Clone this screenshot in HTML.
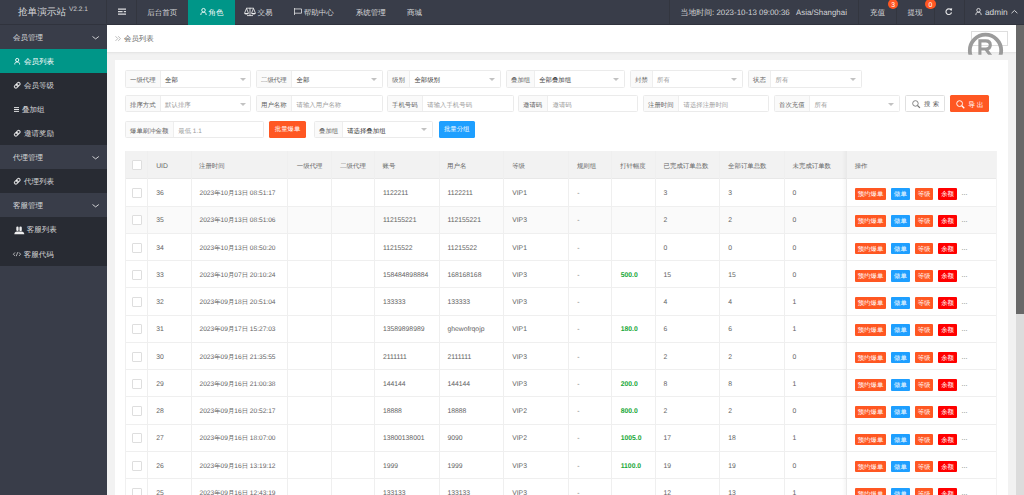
<!DOCTYPE html><html><head><meta charset="utf-8"><title>会员列表</title><style>
*{margin:0;padding:0;box-sizing:border-box}
html,body{width:1024px;height:495px;overflow:hidden;background:#f2f2f2}
body{position:relative;font-family:"Liberation Sans",sans-serif;text-rendering:geometricPrecision;color:#666}
.ab{position:absolute;white-space:nowrap}
svg{position:absolute;overflow:visible}
#hdr{position:absolute;left:0;top:0;width:1024px;height:25px;background:#393d49;border-bottom:1px solid #30333d}
.ht{position:absolute;top:0;height:24px;line-height:25.4px;font-size:7.5px;color:rgba(255,255,255,.8);white-space:nowrap}
.hsep{position:absolute;top:0;width:1px;height:24px;background:#33363f}
.badge{position:absolute;top:-1.2px;width:10.6px;height:10.6px;border-radius:50%;background:#ff5722;color:#fff;font-size:6.8px;line-height:13.4px;text-align:center}
#side{position:absolute;left:0;top:25px;width:107px;height:470px;background:#393d49}
.si{position:absolute;left:0;width:107px;height:24.06px;line-height:26px;font-size:7.5px;color:rgba(255,255,255,.8);white-space:nowrap}
.si.ch{background:#282b33}
.si.on{background:#009688;color:#fff}
#crumb{position:absolute;left:107px;top:25px;width:909px;height:28px;background:#fff;border-bottom:1px solid #e6e6e6;box-shadow:0 1px 2px rgba(0,0,0,.03)}
#card{position:absolute;left:115px;top:59.6px;width:893px;height:500px;background:#fff}
.fb{position:absolute;height:17.2px;border:1px solid #ebebeb;border-radius:1.5px;background:#fff;font-size:6.4px}
.fl{position:absolute;left:0;top:0;bottom:0;background:#fafafa;border-right:1px solid #eee;color:#5f5f5f;line-height:15px;padding-top:1.5px;padding-left:4px;white-space:nowrap}
.fv{position:absolute;top:1.5px;line-height:15px;color:#333;white-space:nowrap}
.fv.ph{color:#9c9c9c}
.arr{position:absolute;top:6.4px;width:0;height:0;border-left:3.1px solid transparent;border-right:3.1px solid transparent;border-top:3.2px solid #c2c2c2}
.btn{position:absolute;height:17px;line-height:18.6px;color:#fff;font-size:6.4px;text-align:center;border-radius:1.5px;white-space:nowrap}
#tbl{position:absolute;left:125px;top:151.2px;width:872px;height:360px;border-left:1px solid #f0f0f0;border-right:1px solid #f3f3f3;overflow:hidden}
.th{position:absolute;left:0;top:0;width:100%;height:27.4px;background:#f2f2f2;border-bottom:1px solid #e8e8e8}
.tr{position:absolute;left:0;width:100%;height:27.26px;border-bottom:1px solid #efefef}
.vl{position:absolute;top:0;width:1px;height:360px;background:#efefef}
.c{position:absolute;font-size:6.8px;line-height:10px;color:#646464;white-space:nowrap}
.c.z{font-size:6.4px;color:#666}
.c i{font-style:normal;font-size:6.4px}
.cb{position:absolute;width:9.8px;height:10px;border:1px solid #dedede;background:#fff;border-radius:1px}
.ob{position:absolute;height:11.7px;line-height:13.4px;font-size:6.4px;color:#fff;text-align:center;border-radius:1px;white-space:nowrap}
#fix{position:absolute;left:846px;top:151.2px;width:150px;height:360px;background:transparent;overflow:hidden;border-left:1px solid #e9e9e9}
#fsh{position:absolute;left:842px;top:151.2px;width:4px;height:360px;background:linear-gradient(to right,rgba(0,0,0,0),rgba(0,0,0,.035))}
#sb{position:absolute;left:1016px;top:25px;width:8px;height:470px;background:#dcdcdc}
#thumb{position:absolute;left:0;top:0;width:8px;height:289px;background:#686868}
</style></head><body>
<div id="hdr">
<div class="ht" style="left:18px;top:-0.5px;font-size:9.6px;color:rgba(255,255,255,.8)">抢单演示站</div>
<div class="ht" style="left:69px;top:-3.2px;font-size:6.5px;color:rgba(255,255,255,.75)">V2.2.1</div>
<div class="hsep" style="left:106.3px"></div>
<div class="hsep" style="left:136.2px"></div>
<svg style="left:118px;top:8px" width="8" height="7"><path d="M0 1.1H8M0 3.6H4.6M5.8 3.6H8M0 6.1H8" stroke="rgba(255,255,255,.82)" stroke-width="1.2"/></svg>
<div class="ht" style="left:147.3px">后台首页</div>
<div style="position:absolute;left:188.1px;top:0;width:46.7px;height:25px;background:#009688"></div>
<svg style="left:199.5px;top:7.9px" width="7.0" height="7.1" viewBox="0 0 7 7.10" preserveAspectRatio="none"><circle cx="3.5" cy="2.2" r="1.75" fill="none" stroke="#fff" stroke-width="0.90"/><path d="M0.9 7.00V6.00C0.9 4.9 2.0 4.45 3.5 4.45C5.0 4.45 6.1 4.9 6.1 6.00V7.00" fill="none" stroke="#fff" stroke-width="0.90"/></svg>
<div class="ht" style="left:208.6px;color:#fff">角色</div>
<svg style="left:242px;top:5px" width="16" height="13" viewBox="0 0 16 13"><g fill="none" stroke="rgba(255,255,255,.85)" stroke-width="0.9"><path d="M4.3 3.2H11.7M8 2.8V10.6M5 10.6H11"/><path d="M4.5 3.4L2.6 8.1M4.5 3.4L6.4 8.1M11.5 3.4L9.6 8.1M11.5 3.4L13.4 8.1"/></g><path d="M2.1 8H6.9Q6.6 9.6 4.5 9.6Q2.4 9.6 2.1 8ZM9.1 8H13.9Q13.6 9.6 11.5 9.6Q9.4 9.6 9.1 8Z" fill="rgba(255,255,255,.9)"/></svg>
<div class="ht" style="left:257.4px">交易</div>
<svg style="left:294px;top:8px" width="8" height="7" viewBox="0 0 16 14"><g fill="none" stroke="rgba(255,255,255,.8)" stroke-width="1.7"><path d="M1 0V14"/><path d="M1 1.9H15V10.4H1"/></g></svg>
<div class="ht" style="left:303.8px">帮助中心</div>
<div class="ht" style="left:355.8px">系统管理</div>
<div class="ht" style="left:407px">商城</div>
<div class="hsep" style="left:669.4px"></div>
<div class="ht" style="left:680.5px;font-size:7.9px;color:rgba(255,255,255,.78)">当地时间: 2023-10-13 09:00:36</div>
<div class="ht" style="left:796px;font-size:7.9px;color:rgba(255,255,255,.78)">Asia/Shanghai</div>
<div class="hsep" style="left:858.4px"></div>
<div class="hsep" style="left:896.3px"></div>
<div class="hsep" style="left:933.6px"></div>
<div class="hsep" style="left:963.8px"></div>
<div class="ht" style="left:869.9px">充值</div>
<div class="badge" style="left:887.9px">3</div>
<div class="ht" style="left:907.4px">提现</div>
<div class="badge" style="left:925.2px">0</div>
<svg style="left:944.9px;top:7.8px" width="7.4" height="7.4" viewBox="0 0 14 14"><path d="M11.6 4.2A5.3 5.3 0 1 0 12.3 8.2" fill="none" stroke="rgba(255,255,255,.85)" stroke-width="2.2"/><path d="M8.6 1.2L13.6 0.6L13 5.8Z" fill="rgba(255,255,255,.85)"/></svg>
<svg style="left:975.0px;top:8.0px" width="7.0" height="7.2" viewBox="0 0 7 7.20" preserveAspectRatio="none"><circle cx="3.5" cy="2.2" r="1.75" fill="none" stroke="rgba(255,255,255,.85)" stroke-width="0.90"/><path d="M0.9 7.10V6.10C0.9 4.9 2.0 4.45 3.5 4.45C5.0 4.45 6.1 4.9 6.1 6.10V7.10" fill="none" stroke="rgba(255,255,255,.85)" stroke-width="0.90"/></svg>
<div class="ht" style="left:985px;font-size:8.3px;color:rgba(255,255,255,.8)">admin</div>
<svg style="left:1011.4px;top:9.8px" width="6.9" height="3.7"><path d="M0.5 3.2 L3.45 0.5 L6.4 3.2" fill="none" stroke="rgba(255,255,255,.75)" stroke-width="1.0"/></svg>
</div>
<div id="side">
<div class="si" style="top:0.00px">
<span class="ab" style="left:13px">会员管理</span>
<svg style="left:91.6px;top:10.6px" width="7.3" height="3.4"><path d="M0.5 0.5 L3.65 2.9 L6.8 0.5" fill="none" stroke="rgba(255,255,255,.75)" stroke-width="1.0"/></svg>
</div>
<div class="si on" style="top:24.06px">
<svg style="left:13.8px;top:8.9px" width="6.4" height="6.6" viewBox="0 0 7 7.22" preserveAspectRatio="none"><circle cx="3.5" cy="2.2" r="1.75" fill="none" stroke="#fff" stroke-width="0.98"/><path d="M0.9 7.12V6.12C0.9 4.9 2.0 4.45 3.5 4.45C5.0 4.45 6.1 4.9 6.1 6.12V7.12" fill="none" stroke="#fff" stroke-width="0.98"/></svg>
<span class="ab" style="left:24px">会员列表</span>
</div>
<div class="si ch" style="top:48.12px">
<svg style="left:12.8px;top:7.7px" width="8.5" height="8.5" viewBox="0 0 17 17"><g transform="rotate(-45 8.5 8.5)" fill="none" stroke="rgba(255,255,255,.8)" stroke-width="2.3"><rect x="1.6" y="5.5" width="8.2" height="6" rx="3"/><rect x="7.2" y="5.5" width="8.2" height="6" rx="3"/></g></svg>
<span class="ab" style="left:24px">会员等级</span>
</div>
<div class="si ch" style="top:72.18px">
<svg style="left:14.2px;top:9.6px" width="5" height="5"><path d="M0 0.6H5M0 2.5H5M0 4.4H5" stroke="rgba(255,255,255,.85)" stroke-width="1"/></svg>
<span class="ab" style="left:21.9px">叠加组</span>
</div>
<div class="si ch" style="top:96.24px">
<svg style="left:12.8px;top:7.7px" width="8.5" height="8.5" viewBox="0 0 17 17"><g transform="rotate(-45 8.5 8.5)" fill="none" stroke="rgba(255,255,255,.8)" stroke-width="2.3"><rect x="1.6" y="5.5" width="8.2" height="6" rx="3"/><rect x="7.2" y="5.5" width="8.2" height="6" rx="3"/></g></svg>
<span class="ab" style="left:24px">邀请奖励</span>
</div>
<div class="si" style="top:120.30px">
<span class="ab" style="left:13px">代理管理</span>
<svg style="left:91.6px;top:10.6px" width="7.3" height="3.4"><path d="M0.5 0.5 L3.65 2.9 L6.8 0.5" fill="none" stroke="rgba(255,255,255,.75)" stroke-width="1.0"/></svg>
</div>
<div class="si ch" style="top:144.36px">
<svg style="left:12.8px;top:7.7px" width="8.5" height="8.5" viewBox="0 0 17 17"><g transform="rotate(-45 8.5 8.5)" fill="none" stroke="rgba(255,255,255,.8)" stroke-width="2.3"><rect x="1.6" y="5.5" width="8.2" height="6" rx="3"/><rect x="7.2" y="5.5" width="8.2" height="6" rx="3"/></g></svg>
<span class="ab" style="left:24px">代理列表</span>
</div>
<div class="si" style="top:168.42px">
<span class="ab" style="left:13px">客服管理</span>
<svg style="left:91.6px;top:10.6px" width="7.3" height="3.4"><path d="M0.5 0.5 L3.65 2.9 L6.8 0.5" fill="none" stroke="rgba(255,255,255,.75)" stroke-width="1.0"/></svg>
</div>
<div class="si ch" style="top:192.48px">
<svg style="left:13.6px;top:8.1px" width="10.5" height="8.4" viewBox="0 0 10.5 8.4"><g fill="rgba(255,255,255,.92)"><rect x="2.3" y="0.5" width="2.3" height="4.6" rx="1.15"/><rect x="5.4" y="0.5" width="2.4" height="4.6" rx="1.2"/><path d="M0.3 8.2Q0.5 5.5 3 5.5H7.5Q10 5.5 10.3 8.2Z"/></g></svg>
<span class="ab" style="left:26.7px">客服列表</span>
</div>
<div class="si ch" style="top:216.54px">
<svg style="left:13.1px;top:10.4px" width="8" height="4.4" viewBox="0 0 16 8"><g fill="none" stroke="rgba(255,255,255,.9)" stroke-width="1.4"><path d="M4 0.5L0.8 4L4 7.5M12 0.5L15.2 4L12 7.5M9.5 0L6.5 8"/></g></svg>
<span class="ab" style="left:23.7px">客服代码</span>
</div>
</div>
<div id="crumb">
<svg style="left:8px;top:11.1px" width="6" height="5.2"><path d="M0.5 0.3L2.8 2.6L0.5 4.9M3.2 0.3L5.5 2.6L3.2 4.9" fill="none" stroke="#aaa" stroke-width="0.8"/></svg>
<span class="ab" style="left:17px;top:0;line-height:27px;font-size:7.4px;color:#5f5f5f">会员列表</span>
<div style="position:absolute;left:863.5px;top:6.3px;width:37.5px;height:15px;border:1px solid #dedede"></div>
</div>
<svg style="left:967px;top:32px;" width="37" height="23" viewBox="0 0 37 23"><defs><clipPath id="cl"><rect x="0" y="0" width="37" height="22.7"/></clipPath></defs><g clip-path="url(#cl)"><circle cx="18.5" cy="18.4" r="15.7" fill="none" stroke="#9b9b9b" stroke-width="3.8"/><path d="M12.9 24V8.9H18.8C22 8.9 23.3 10.6 23.3 13C23.3 15.4 21.6 17 18.8 17H12.9M18.6 16.8L24 24" fill="none" stroke="#9b9b9b" stroke-width="3.1"/></g></svg>
<div id="card"></div>
<div class="fb" style="left:125px;top:70.4px;width:126px"><div class="fl" style="width:35px">一级代理</div><div class="fv" style="left:39.1px">全部</div><div class="arr" style="left:113.5px"></div></div>
<div class="fb" style="left:256px;top:70.4px;width:127px"><div class="fl" style="width:35px">二级代理</div><div class="fv" style="left:39.5px">全部</div><div class="arr" style="left:113.9px"></div></div>
<div class="fb" style="left:387px;top:70.4px;width:114px"><div class="fl" style="width:22px">级别</div><div class="fv" style="left:26.4px">全部级别</div><div class="arr" style="left:101.1px"></div></div>
<div class="fb" style="left:506px;top:70.4px;width:119px"><div class="fl" style="width:28px">叠加组</div><div class="fv" style="left:32.2px">全部叠加组</div><div class="arr" style="left:106.2px"></div></div>
<div class="fb" style="left:630px;top:70.4px;width:113px"><div class="fl" style="width:22px">封禁</div><div class="fv ph" style="left:26.1px">所有</div><div class="arr" style="left:100.2px"></div></div>
<div class="fb" style="left:748px;top:70.4px;width:114px"><div class="fl" style="width:22px">状态</div><div class="fv ph" style="left:26.5px">所有</div><div class="arr" style="left:100.9px"></div></div>
<div class="fb" style="left:125px;top:95.3px;width:126px"><div class="fl" style="width:35px">排序方式</div><div class="fv ph" style="left:39.1px">默认排序</div><div class="arr" style="left:113.5px"></div></div>
<div class="fb" style="left:256px;top:95.3px;width:127px"><div class="fl" style="width:35px">用户名称</div><div class="fv ph" style="left:39.5px">请输入用户名称</div></div>
<div class="fb" style="left:387px;top:95.3px;width:127px"><div class="fl" style="width:35px">手机号码</div><div class="fv ph" style="left:39.3px">请输入手机号码</div></div>
<div class="fb" style="left:518px;top:95.3px;width:120px"><div class="fl" style="width:29px">邀请码</div><div class="fv ph" style="left:33.5px">邀请码</div></div>
<div class="fb" style="left:643px;top:95.3px;width:126px"><div class="fl" style="width:35px">注册时间</div><div class="fv ph" style="left:39.5px">请选择注册时间</div></div>
<div class="fb" style="left:774px;top:95.3px;width:126px"><div class="fl" style="width:35px">首次充值</div><div class="fv ph" style="left:39.6px">所有</div><div class="arr" style="left:113.1px"></div></div>
<div class="btn" style="left:905px;top:95.2px;width:40px;border:1px solid #e0e0e0;background:#fff"></div>
<svg style="left:911.7px;top:99.8px" width="8.6" height="8.6" viewBox="0 0 18 18"><circle cx="7.2" cy="7.2" r="5.8" fill="none" stroke="#777" stroke-width="1.9"/><path d="M11.5 11.5L16.6 16.6" stroke="#777" stroke-width="2.6"/></svg>
<div class="ab" style="left:924px;top:96.3px;line-height:17px;font-size:6.4px;color:#555;letter-spacing:2.3px">搜索</div>
<div class="btn" style="left:950.2px;top:95.2px;width:38.5px;background:#ff5722"></div>
<svg style="left:955.8px;top:99.6px" width="9" height="9" viewBox="0 0 18 18"><circle cx="7.2" cy="7.2" r="5.8" fill="none" stroke="#fff" stroke-width="1.9"/><path d="M11.5 11.5L16.6 16.6" stroke="#fff" stroke-width="2.6"/></svg>
<div class="ab" style="left:968.3px;top:96.6px;line-height:17px;font-size:6.8px;color:#fff;letter-spacing:1.6px">导出</div>
<div class="fb" style="left:125px;top:121.0px;width:139px"><div class="fl" style="width:48px">爆单刷冲金额</div><div class="fv ph" style="left:52.3px">最低 1.1</div></div>
<div class="btn" style="left:269.4px;top:121.0px;width:36.4px;height:16.6px;line-height:18.2px;background:#ff5722">批量爆单</div>
<div class="fb" style="left:314px;top:121.0px;width:119px"><div class="fl" style="width:28px">叠加组</div><div class="fv" style="left:32.2px">请选择叠加组</div><div class="arr" style="left:106.2px"></div></div>
<div class="btn" style="left:438.5px;top:121.0px;width:36.4px;height:16.6px;line-height:18.2px;background:#1e9fff">批量分组</div>
<div id="tbl">
<div class="th" style="height:28.1px"></div>
<div class="tr" style="top:28.10px;"></div>
<div class="tr" style="top:55.36px;background:#fafafa;"></div>
<div class="tr" style="top:82.62px;"></div>
<div class="tr" style="top:109.88px;"></div>
<div class="tr" style="top:137.14px;"></div>
<div class="tr" style="top:164.40px;"></div>
<div class="tr" style="top:191.66px;"></div>
<div class="tr" style="top:218.92px;"></div>
<div class="tr" style="top:246.18px;"></div>
<div class="tr" style="top:273.44px;"></div>
<div class="tr" style="top:300.70px;"></div>
<div class="tr" style="top:327.96px;"></div>
<div class="vl" style="left:21px"></div>
<div class="vl" style="left:65px"></div>
<div class="vl" style="left:161px"></div>
<div class="vl" style="left:205px"></div>
<div class="vl" style="left:248px"></div>
<div class="vl" style="left:313px"></div>
<div class="vl" style="left:377px"></div>
<div class="vl" style="left:442px"></div>
<div class="vl" style="left:485px"></div>
<div class="vl" style="left:529px"></div>
<div class="vl" style="left:593px"></div>
<div class="vl" style="left:658px"></div>
<div class="cb" style="left:6.2px;top:9.10px"></div>
<div class="c" style="left:30.2px;top:11.00px;">UID</div>
<div class="c z" style="left:73.0px;top:11.00px;">注册时间</div>
<div class="c z" style="left:161.7px;width:43.9px;text-align:center;top:11.00px">一级代理</div>
<div class="c z" style="left:205.6px;width:42.8px;text-align:center;top:11.00px">二级代理</div>
<div class="c z" style="left:256.6px;top:11.00px;">账号</div>
<div class="c z" style="left:321.1px;top:11.00px;">用户名</div>
<div class="c z" style="left:386.2px;top:11.00px;">等级</div>
<div class="c z" style="left:450.9px;top:11.00px;">规则组</div>
<div class="c z" style="left:494.2px;top:11.00px;">打针幅度</div>
<div class="c z" style="left:537.6px;top:11.00px;">已完成订单总数</div>
<div class="c z" style="left:602.1px;top:11.00px;">全部订单总数</div>
<div class="c z" style="left:666.6px;top:11.00px;">未完成订单数</div>
<div class="cb" style="left:6.2px;top:36.83px"></div>
<div class="c" style="left:30.2px;top:37.83px;">36</div>
<div class="c" style="left:73.5px;top:37.83px;font-size:6.6px">2023<i>年</i>10<i>月</i>13<i>日</i> 08:51:17</div>
<div class="c" style="left:256.9px;top:37.83px;">1122211</div>
<div class="c" style="left:321.4px;top:37.83px;">1122211</div>
<div class="c" style="left:386.2px;top:37.83px;">VIP1</div>
<div class="c" style="left:451.2px;top:37.83px;">-</div>
<div class="c" style="left:537.6px;top:37.83px;">3</div>
<div class="c" style="left:602.3px;top:37.83px;">3</div>
<div class="c" style="left:666.6px;top:37.83px;">0</div>
<div class="cb" style="left:6.2px;top:64.09px"></div>
<div class="c" style="left:30.2px;top:65.09px;">35</div>
<div class="c" style="left:73.5px;top:65.09px;font-size:6.6px">2023<i>年</i>10<i>月</i>13<i>日</i> 08:51:06</div>
<div class="c" style="left:256.9px;top:65.09px;">112155221</div>
<div class="c" style="left:321.4px;top:65.09px;">112155221</div>
<div class="c" style="left:386.2px;top:65.09px;">VIP3</div>
<div class="c" style="left:451.2px;top:65.09px;">-</div>
<div class="c" style="left:537.6px;top:65.09px;">2</div>
<div class="c" style="left:602.3px;top:65.09px;">2</div>
<div class="c" style="left:666.6px;top:65.09px;">0</div>
<div class="cb" style="left:6.2px;top:91.35px"></div>
<div class="c" style="left:30.2px;top:92.35px;">34</div>
<div class="c" style="left:73.5px;top:92.35px;font-size:6.6px">2023<i>年</i>10<i>月</i>13<i>日</i> 08:50:20</div>
<div class="c" style="left:256.9px;top:92.35px;">11215522</div>
<div class="c" style="left:321.4px;top:92.35px;">11215522</div>
<div class="c" style="left:386.2px;top:92.35px;">VIP1</div>
<div class="c" style="left:451.2px;top:92.35px;">-</div>
<div class="c" style="left:537.6px;top:92.35px;">0</div>
<div class="c" style="left:602.3px;top:92.35px;">0</div>
<div class="c" style="left:666.6px;top:92.35px;">0</div>
<div class="cb" style="left:6.2px;top:118.61px"></div>
<div class="c" style="left:30.2px;top:119.61px;">33</div>
<div class="c" style="left:73.5px;top:119.61px;font-size:6.6px">2023<i>年</i>10<i>月</i>07<i>日</i> 20:10:24</div>
<div class="c" style="left:256.9px;top:119.61px;">158484898884</div>
<div class="c" style="left:321.4px;top:119.61px;">168168168</div>
<div class="c" style="left:386.2px;top:119.61px;">VIP3</div>
<div class="c" style="left:451.2px;top:119.61px;">-</div>
<div class="c" style="left:494.7px;top:119.61px;color:#1aa83b;font-weight:bold">500.0</div>
<div class="c" style="left:537.6px;top:119.61px;">15</div>
<div class="c" style="left:602.3px;top:119.61px;">15</div>
<div class="c" style="left:666.6px;top:119.61px;">0</div>
<div class="cb" style="left:6.2px;top:145.87px"></div>
<div class="c" style="left:30.2px;top:146.87px;">32</div>
<div class="c" style="left:73.5px;top:146.87px;font-size:6.6px">2023<i>年</i>09<i>月</i>18<i>日</i> 20:51:04</div>
<div class="c" style="left:256.9px;top:146.87px;">133333</div>
<div class="c" style="left:321.4px;top:146.87px;">133333</div>
<div class="c" style="left:386.2px;top:146.87px;">VIP3</div>
<div class="c" style="left:451.2px;top:146.87px;">-</div>
<div class="c" style="left:537.6px;top:146.87px;">4</div>
<div class="c" style="left:602.3px;top:146.87px;">4</div>
<div class="c" style="left:666.6px;top:146.87px;">1</div>
<div class="cb" style="left:6.2px;top:173.13px"></div>
<div class="c" style="left:30.2px;top:174.13px;">31</div>
<div class="c" style="left:73.5px;top:174.13px;font-size:6.6px">2023<i>年</i>09<i>月</i>17<i>日</i> 15:27:03</div>
<div class="c" style="left:256.9px;top:174.13px;">13589898989</div>
<div class="c" style="left:321.4px;top:174.13px;">ghewofrqojp</div>
<div class="c" style="left:386.2px;top:174.13px;">VIP1</div>
<div class="c" style="left:451.2px;top:174.13px;">-</div>
<div class="c" style="left:494.7px;top:174.13px;color:#1aa83b;font-weight:bold">180.0</div>
<div class="c" style="left:537.6px;top:174.13px;">6</div>
<div class="c" style="left:602.3px;top:174.13px;">6</div>
<div class="c" style="left:666.6px;top:174.13px;">1</div>
<div class="cb" style="left:6.2px;top:200.39px"></div>
<div class="c" style="left:30.2px;top:201.39px;">30</div>
<div class="c" style="left:73.5px;top:201.39px;font-size:6.6px">2023<i>年</i>09<i>月</i>16<i>日</i> 21:35:55</div>
<div class="c" style="left:256.9px;top:201.39px;">2111111</div>
<div class="c" style="left:321.4px;top:201.39px;">2111111</div>
<div class="c" style="left:386.2px;top:201.39px;">VIP3</div>
<div class="c" style="left:451.2px;top:201.39px;">-</div>
<div class="c" style="left:537.6px;top:201.39px;">2</div>
<div class="c" style="left:602.3px;top:201.39px;">2</div>
<div class="c" style="left:666.6px;top:201.39px;">0</div>
<div class="cb" style="left:6.2px;top:227.65px"></div>
<div class="c" style="left:30.2px;top:228.65px;">29</div>
<div class="c" style="left:73.5px;top:228.65px;font-size:6.6px">2023<i>年</i>09<i>月</i>16<i>日</i> 21:00:38</div>
<div class="c" style="left:256.9px;top:228.65px;">144144</div>
<div class="c" style="left:321.4px;top:228.65px;">144144</div>
<div class="c" style="left:386.2px;top:228.65px;">VIP3</div>
<div class="c" style="left:451.2px;top:228.65px;">-</div>
<div class="c" style="left:494.7px;top:228.65px;color:#1aa83b;font-weight:bold">200.0</div>
<div class="c" style="left:537.6px;top:228.65px;">8</div>
<div class="c" style="left:602.3px;top:228.65px;">8</div>
<div class="c" style="left:666.6px;top:228.65px;">1</div>
<div class="cb" style="left:6.2px;top:254.91px"></div>
<div class="c" style="left:30.2px;top:255.91px;">28</div>
<div class="c" style="left:73.5px;top:255.91px;font-size:6.6px">2023<i>年</i>09<i>月</i>16<i>日</i> 20:52:17</div>
<div class="c" style="left:256.9px;top:255.91px;">18888</div>
<div class="c" style="left:321.4px;top:255.91px;">18888</div>
<div class="c" style="left:386.2px;top:255.91px;">VIP2</div>
<div class="c" style="left:451.2px;top:255.91px;">-</div>
<div class="c" style="left:494.7px;top:255.91px;color:#1aa83b;font-weight:bold">800.0</div>
<div class="c" style="left:537.6px;top:255.91px;">2</div>
<div class="c" style="left:602.3px;top:255.91px;">2</div>
<div class="c" style="left:666.6px;top:255.91px;">0</div>
<div class="cb" style="left:6.2px;top:282.17px"></div>
<div class="c" style="left:30.2px;top:283.17px;">27</div>
<div class="c" style="left:73.5px;top:283.17px;font-size:6.6px">2023<i>年</i>09<i>月</i>16<i>日</i> 18:07:00</div>
<div class="c" style="left:256.9px;top:283.17px;">13800138001</div>
<div class="c" style="left:321.4px;top:283.17px;">9090</div>
<div class="c" style="left:386.2px;top:283.17px;">VIP2</div>
<div class="c" style="left:451.2px;top:283.17px;">-</div>
<div class="c" style="left:494.7px;top:283.17px;color:#1aa83b;font-weight:bold">1005.0</div>
<div class="c" style="left:537.6px;top:283.17px;">17</div>
<div class="c" style="left:602.3px;top:283.17px;">18</div>
<div class="c" style="left:666.6px;top:283.17px;">1</div>
<div class="cb" style="left:6.2px;top:309.43px"></div>
<div class="c" style="left:30.2px;top:310.43px;">26</div>
<div class="c" style="left:73.5px;top:310.43px;font-size:6.6px">2023<i>年</i>09<i>月</i>16<i>日</i> 13:19:12</div>
<div class="c" style="left:256.9px;top:310.43px;">1999</div>
<div class="c" style="left:321.4px;top:310.43px;">1999</div>
<div class="c" style="left:386.2px;top:310.43px;">VIP3</div>
<div class="c" style="left:451.2px;top:310.43px;">-</div>
<div class="c" style="left:494.7px;top:310.43px;color:#1aa83b;font-weight:bold">1100.0</div>
<div class="c" style="left:537.6px;top:310.43px;">19</div>
<div class="c" style="left:602.3px;top:310.43px;">19</div>
<div class="c" style="left:666.6px;top:310.43px;">0</div>
<div class="cb" style="left:6.2px;top:336.69px"></div>
<div class="c" style="left:30.2px;top:337.69px;">25</div>
<div class="c" style="left:73.5px;top:337.69px;font-size:6.6px">2023<i>年</i>09<i>月</i>16<i>日</i> 12:43:19</div>
<div class="c" style="left:256.9px;top:337.69px;">133133</div>
<div class="c" style="left:321.4px;top:337.69px;">133133</div>
<div class="c" style="left:386.2px;top:337.69px;">VIP3</div>
<div class="c" style="left:451.2px;top:337.69px;">-</div>
<div class="c" style="left:537.6px;top:337.69px;">12</div>
<div class="c" style="left:602.3px;top:337.69px;">13</div>
<div class="c" style="left:666.6px;top:337.69px;">1</div>
</div>
<div id="fsh"></div>
<div id="fix">
<div class="th" style="height:28.1px"></div>
<div class="tr" style="top:28.10px;background:#fff;"></div>
<div class="tr" style="top:55.36px;background:#fafafa;"></div>
<div class="tr" style="top:82.62px;background:#fff;"></div>
<div class="tr" style="top:109.88px;background:#fff;"></div>
<div class="tr" style="top:137.14px;background:#fff;"></div>
<div class="tr" style="top:164.40px;background:#fff;"></div>
<div class="tr" style="top:191.66px;background:#fff;"></div>
<div class="tr" style="top:218.92px;background:#fff;"></div>
<div class="tr" style="top:246.18px;background:#fff;"></div>
<div class="tr" style="top:273.44px;background:#fff;"></div>
<div class="tr" style="top:300.70px;background:#fff;"></div>
<div class="tr" style="top:327.96px;background:#fff;"></div>
<div class="c z" style="left:7.7px;top:11.00px">操作</div>
<div class="ob" style="left:8.0px;top:36.98px;width:31px;background:#ff5722">预约爆单</div>
<div class="ob" style="left:44.3px;top:36.98px;width:18.4px;background:#1e9fff">做单</div>
<div class="ob" style="left:68.0px;top:36.98px;width:18.2px;background:#ff5722">等级</div>
<div class="ob" style="left:91.3px;top:36.98px;width:18.5px;background:#ff0000">余额</div>
<div class="c" style="left:114.6px;top:37.83px;color:#666;font-size:7px">...</div>
<div class="ob" style="left:8.0px;top:64.24px;width:31px;background:#ff5722">预约爆单</div>
<div class="ob" style="left:44.3px;top:64.24px;width:18.4px;background:#1e9fff">做单</div>
<div class="ob" style="left:68.0px;top:64.24px;width:18.2px;background:#ff5722">等级</div>
<div class="ob" style="left:91.3px;top:64.24px;width:18.5px;background:#ff0000">余额</div>
<div class="c" style="left:114.6px;top:65.09px;color:#666;font-size:7px">...</div>
<div class="ob" style="left:8.0px;top:91.50px;width:31px;background:#ff5722">预约爆单</div>
<div class="ob" style="left:44.3px;top:91.50px;width:18.4px;background:#1e9fff">做单</div>
<div class="ob" style="left:68.0px;top:91.50px;width:18.2px;background:#ff5722">等级</div>
<div class="ob" style="left:91.3px;top:91.50px;width:18.5px;background:#ff0000">余额</div>
<div class="c" style="left:114.6px;top:92.35px;color:#666;font-size:7px">...</div>
<div class="ob" style="left:8.0px;top:118.76px;width:31px;background:#ff5722">预约爆单</div>
<div class="ob" style="left:44.3px;top:118.76px;width:18.4px;background:#1e9fff">做单</div>
<div class="ob" style="left:68.0px;top:118.76px;width:18.2px;background:#ff5722">等级</div>
<div class="ob" style="left:91.3px;top:118.76px;width:18.5px;background:#ff0000">余额</div>
<div class="c" style="left:114.6px;top:119.61px;color:#666;font-size:7px">...</div>
<div class="ob" style="left:8.0px;top:146.02px;width:31px;background:#ff5722">预约爆单</div>
<div class="ob" style="left:44.3px;top:146.02px;width:18.4px;background:#1e9fff">做单</div>
<div class="ob" style="left:68.0px;top:146.02px;width:18.2px;background:#ff5722">等级</div>
<div class="ob" style="left:91.3px;top:146.02px;width:18.5px;background:#ff0000">余额</div>
<div class="c" style="left:114.6px;top:146.87px;color:#666;font-size:7px">...</div>
<div class="ob" style="left:8.0px;top:173.28px;width:31px;background:#ff5722">预约爆单</div>
<div class="ob" style="left:44.3px;top:173.28px;width:18.4px;background:#1e9fff">做单</div>
<div class="ob" style="left:68.0px;top:173.28px;width:18.2px;background:#ff5722">等级</div>
<div class="ob" style="left:91.3px;top:173.28px;width:18.5px;background:#ff0000">余额</div>
<div class="c" style="left:114.6px;top:174.13px;color:#666;font-size:7px">...</div>
<div class="ob" style="left:8.0px;top:200.54px;width:31px;background:#ff5722">预约爆单</div>
<div class="ob" style="left:44.3px;top:200.54px;width:18.4px;background:#1e9fff">做单</div>
<div class="ob" style="left:68.0px;top:200.54px;width:18.2px;background:#ff5722">等级</div>
<div class="ob" style="left:91.3px;top:200.54px;width:18.5px;background:#ff0000">余额</div>
<div class="c" style="left:114.6px;top:201.39px;color:#666;font-size:7px">...</div>
<div class="ob" style="left:8.0px;top:227.80px;width:31px;background:#ff5722">预约爆单</div>
<div class="ob" style="left:44.3px;top:227.80px;width:18.4px;background:#1e9fff">做单</div>
<div class="ob" style="left:68.0px;top:227.80px;width:18.2px;background:#ff5722">等级</div>
<div class="ob" style="left:91.3px;top:227.80px;width:18.5px;background:#ff0000">余额</div>
<div class="c" style="left:114.6px;top:228.65px;color:#666;font-size:7px">...</div>
<div class="ob" style="left:8.0px;top:255.06px;width:31px;background:#ff5722">预约爆单</div>
<div class="ob" style="left:44.3px;top:255.06px;width:18.4px;background:#1e9fff">做单</div>
<div class="ob" style="left:68.0px;top:255.06px;width:18.2px;background:#ff5722">等级</div>
<div class="ob" style="left:91.3px;top:255.06px;width:18.5px;background:#ff0000">余额</div>
<div class="c" style="left:114.6px;top:255.91px;color:#666;font-size:7px">...</div>
<div class="ob" style="left:8.0px;top:282.32px;width:31px;background:#ff5722">预约爆单</div>
<div class="ob" style="left:44.3px;top:282.32px;width:18.4px;background:#1e9fff">做单</div>
<div class="ob" style="left:68.0px;top:282.32px;width:18.2px;background:#ff5722">等级</div>
<div class="ob" style="left:91.3px;top:282.32px;width:18.5px;background:#ff0000">余额</div>
<div class="c" style="left:114.6px;top:283.17px;color:#666;font-size:7px">...</div>
<div class="ob" style="left:8.0px;top:309.58px;width:31px;background:#ff5722">预约爆单</div>
<div class="ob" style="left:44.3px;top:309.58px;width:18.4px;background:#1e9fff">做单</div>
<div class="ob" style="left:68.0px;top:309.58px;width:18.2px;background:#ff5722">等级</div>
<div class="ob" style="left:91.3px;top:309.58px;width:18.5px;background:#ff0000">余额</div>
<div class="c" style="left:114.6px;top:310.43px;color:#666;font-size:7px">...</div>
<div class="ob" style="left:8.0px;top:336.84px;width:31px;background:#ff5722">预约爆单</div>
<div class="ob" style="left:44.3px;top:336.84px;width:18.4px;background:#1e9fff">做单</div>
<div class="ob" style="left:68.0px;top:336.84px;width:18.2px;background:#ff5722">等级</div>
<div class="ob" style="left:91.3px;top:336.84px;width:18.5px;background:#ff0000">余额</div>
<div class="c" style="left:114.6px;top:337.69px;color:#666;font-size:7px">...</div>
</div>
<div id="sb"><div id="thumb"></div></div>
</body></html>
